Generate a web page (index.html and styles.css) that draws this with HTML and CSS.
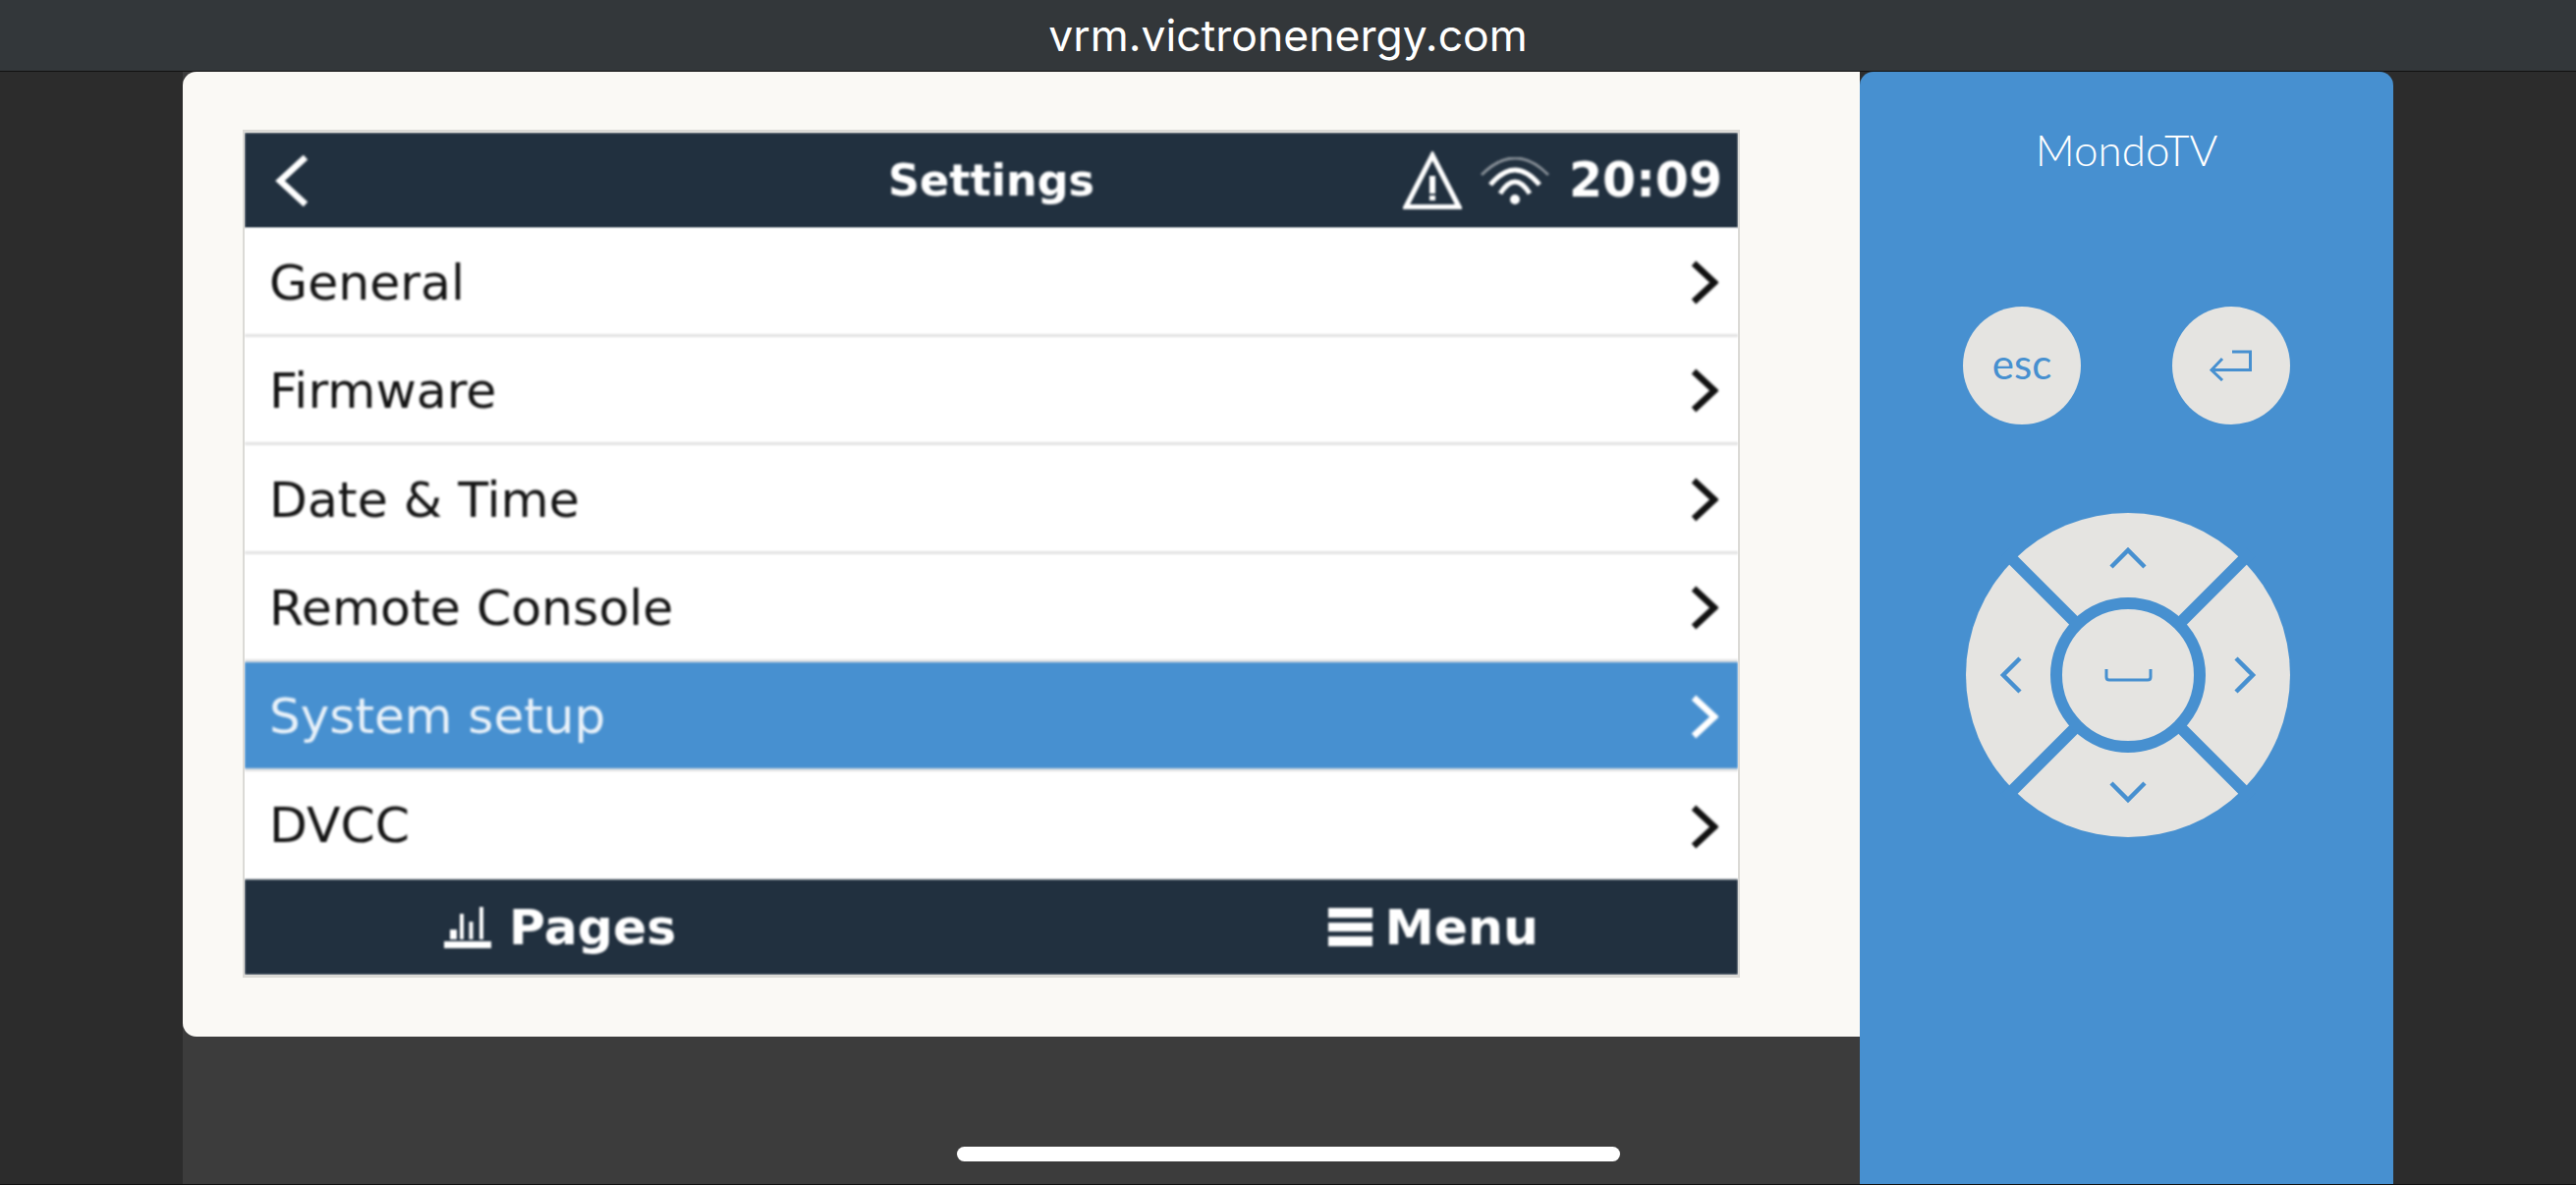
FILE: index.html
```html
<!DOCTYPE html>
<html lang="en">
<head>
    <meta charset="UTF-8">
    <meta name="viewport" content="width=device-width, initial-scale=1.0">
    <title>MondoTV - Remote Console</title>
    <link rel="stylesheet" href="styles.css">
</head>
<body>
    <header class="address-bar">vrm.victronenergy.com</header>

    <div class="stage">
        <main class="viewer">
            <div class="card">
                <div class="console">
                    <div class="console-head">
                        <svg class="back-icon" viewBox="0 0 34 52"><path d="M31 2 L5 26 L31 50" /></svg>
                        <h1 class="console-title">Settings</h1>
                        <div class="status">
                            <svg class="warn-icon" viewBox="0 0 60 59">
                                <path class="warn-outline" d="M30 4 L57 56.5 L3 56.5 Z" />
                                <rect x="27" y="25" width="6" height="18" />
                                <rect x="27" y="45" width="6" height="5" />
                            </svg>
                            <svg class="wifi-icon" viewBox="0 0 70 48">
                                <path class="wifi-far" d="M1 18 Q35 -16 69 18" />
                                <path d="M10 28 Q35 -2 60 28" />
                                <path d="M20 37 Q35 13 50 37" />
                                <circle cx="35" cy="43" r="5" />
                            </svg>
                            <span class="clock">20:09</span>
                        </div>
                    </div>

                    <ul class="menu-list">
                        <li class="menu-row"><span class="row-label">General</span><svg class="chevron" viewBox="0 0 28 45"><path d="M3 3 L24 22.5 L3 42" /></svg></li>
                        <li class="menu-row"><span class="row-label">Firmware</span><svg class="chevron" viewBox="0 0 28 45"><path d="M3 3 L24 22.5 L3 42" /></svg></li>
                        <li class="menu-row"><span class="row-label">Date &amp; Time</span><svg class="chevron" viewBox="0 0 28 45"><path d="M3 3 L24 22.5 L3 42" /></svg></li>
                        <li class="menu-row"><span class="row-label">Remote Console</span><svg class="chevron" viewBox="0 0 28 45"><path d="M3 3 L24 22.5 L3 42" /></svg></li>
                        <li class="menu-row selected"><span class="row-label">System setup</span><svg class="chevron" viewBox="0 0 28 45"><path d="M3 3 L24 22.5 L3 42" /></svg></li>
                        <li class="menu-row"><span class="row-label">DVCC</span><svg class="chevron" viewBox="0 0 28 45"><path d="M3 3 L24 22.5 L3 42" /></svg></li>
                    </ul>

                    <div class="console-foot">
                        <div class="foot-item pages">
                            <svg class="pages-icon" viewBox="0 0 48 42">
                                <rect x="0" y="35" width="48" height="7" />
                                <rect x="6" y="23" width="7" height="10" />
                                <rect x="16" y="7" width="4" height="26" />
                                <rect x="25.5" y="15" width="4" height="18" />
                                <rect x="36" y="0" width="4" height="33" />
                            </svg>
                            Pages
                        </div>
                        <div class="foot-item menu">
                            <svg class="menu-icon" viewBox="0 0 45 39">
                                <rect y="0" width="45" height="10" />
                                <rect y="15" width="45" height="9" />
                                <rect y="29" width="45" height="10" />
                            </svg>
                            Menu
                        </div>
                    </div>
                </div>
            </div>
        </main>

        <aside class="keypad">
            <div class="device-name">MondoTV</div>
            <div class="round-keys">
                <div class="round-key esc">esc</div>
                <div class="round-key">
                    <svg class="enter-icon" viewBox="0 0 44 32">
                        <path d="M23 2 H41.5 V20.5 H3" />
                        <path d="M13 9 L2 20.5 L13 31" />
                    </svg>
                </div>
            </div>
            <svg class="dpad" viewBox="0 0 330 330">
                <circle class="dpad-base" cx="165" cy="165" r="165" />
                <path class="dpad-gap" d="M40 40 L290 290 M290 40 L40 290" />
                <circle class="dpad-ok" cx="165" cy="165" r="73" />
                <path class="dpad-mark" d="M148 55 L165 38 L182 55" />
                <path class="dpad-mark" d="M148 275 L165 292 L182 275" />
                <path class="dpad-mark" d="M55 148 L38 165 L55 182" />
                <path class="dpad-mark" d="M275 148 L292 165 L275 182" />
                <path class="dpad-space" d="M143 159 V167 Q143 170 146 170 H185 Q188 170 188 167 V159" />
            </svg>
        </aside>
    </div>

    <div class="home-bar"></div>
</body>
</html>
```

FILE: styles.css
```css
html, body {
    height: 100%;
}
body {
    margin: 0;
    display: flex;
    flex-direction: column;
    height: 1206px;
    overflow: hidden;
    background-color: #2c2c2c;
    border-bottom: 1px solid #111;
    box-sizing: border-box;
    font-family: "DejaVu Sans", sans-serif;
}

.address-bar {
    flex: none;
    height: 72px;
    line-height: 72px;
    border-bottom: 1px solid #111;
    background-color: #33373a;
    color: #fff;
    text-align: center;
    font-family: Inter, sans-serif;
    font-size: 44.500px;
}

.stage {
    flex: 1;
    display: flex;
    margin-left: 186px;
    width: 2250px;
    min-height: 0;
}

/* left side, the console picture */
.viewer {
    width: 1707px;
    background-color: #3c3c3c;
}
.card {
    padding: 59px 122px 60px 61px;
    background-color: #faf9f5;
    border-radius: 14px 0 0 14px;
}
.console {
    border: solid #dbdad6;
    border-width: 3px 2px;
    background-color: #fff;
    overflow: hidden;
}
/* the console is an upscaled picture, so everything in it is a bit soft */
.console > * {
    filter: blur(0.8px);
}

.console-head {
    display: grid;
    grid-template-columns: 1fr auto 1fr;
    align-items: center;
    height: 97px;
    background-color: #21303f;
    color: #fff;
}
.back-icon {
    width: 34px;
    height: 52px;
    margin-left: 31px;
    fill: none;
    stroke: #fff;
    stroke-width: 6.500;
}
.console-title {
    margin: 0;
    font-size: 44.500px;
    font-weight: bold;
}
.status {
    display: flex;
    justify-content: flex-end;
    align-items: center;
    padding-right: 16px;
}
.warn-icon {
    width: 60px;
    height: 59px;
    margin-right: 19px;
    fill: #fff;
}
.warn-outline {
    fill: none;
    stroke: #fff;
    stroke-width: 5;
}
.wifi-icon {
    width: 70px;
    height: 48px;
    margin-right: 20px;
    fill: none;
    stroke: #fff;
    stroke-width: 5;
}
.wifi-icon circle {
    fill: #fff;
    stroke: none;
}
.wifi-far {
    stroke-width: 3;
    stroke-opacity: 0.45;
}
.clock {
    font-size: 49px;
    font-weight: bold;
}

.menu-list {
    margin: 0;
    padding: 0;
    list-style: none;
}
.menu-row {
    display: flex;
    justify-content: space-between;
    align-items: center;
    box-sizing: border-box;
    height: 110.500px;
    padding: 0 20px 0 25px;
    border-bottom: 3px solid #e2e2e2;
    background-color: #fff;
    color: #151515;
    font-size: 50.500px;
}
.row-label {
    padding-top: 3px;
}
.menu-row:last-child {
    border-bottom: none;
}
.menu-row:last-child .row-label {
    padding-top: 0;
}
.menu-row.selected {
    background-color: #4790d0;
    border-bottom-color: #e2e2e2;
    color: #e8f1f9;
    font-size: 50px;
}
.chevron {
    width: 28px;
    height: 45px;
    margin-top: 3px;
    fill: none;
    stroke: #111;
    stroke-width: 6.500;
}
.selected .chevron {
    stroke: #fff;
}

.console-foot {
    display: flex;
    justify-content: space-between;
    align-items: center;
    height: 97px;
    padding: 0 203px 0 203px;
    background-color: #21303f;
    color: #fff;
    font-size: 50.500px;
    font-weight: bold;
}
.foot-item {
    display: flex;
    align-items: center;
}
.pages {
    gap: 18px;
}
.menu {
    gap: 13px;
}
.pages-icon {
    width: 48px;
    height: 42px;
    fill: #fff;
}
.menu-icon {
    width: 45px;
    height: 39px;
    fill: #fff;
}

/* right side, the blue keypad */
.keypad {
    width: 543px;
    display: flex;
    flex-direction: column;
    align-items: center;
    background-color: #4790d0;
    border-radius: 14px 14px 0 0;
}
.device-name {
    margin-top: 54px;
    line-height: 50px;
    color: #fff;
    font-family: Lato, sans-serif;
    font-size: 44px;
    font-weight: 300;
}
.round-keys {
    display: flex;
    gap: 93px;
    margin-top: 135px;
}
.round-key {
    display: flex;
    justify-content: center;
    align-items: center;
    width: 120px;
    height: 120px;
    border-radius: 50%;
    background-color: #e5e4e1;
    color: #4790d0;
    font-family: Lato, sans-serif;
    font-size: 42px;
}
.esc {
    box-sizing: border-box;
    padding-bottom: 5px;
}
.enter-icon {
    width: 44px;
    height: 32px;
    fill: none;
    stroke: #4790d0;
    stroke-width: 3;
}
.dpad {
    width: 330px;
    height: 330px;
    margin-top: 90px;
    margin-left: 3px;
}
.dpad-base {
    fill: #e5e4e1;
}
.dpad-gap {
    fill: none;
    stroke: #4790d0;
    stroke-width: 12;
}
.dpad-ok {
    fill: #e5e4e1;
    stroke: #4790d0;
    stroke-width: 12;
}
.dpad-mark {
    fill: none;
    stroke: #4790d0;
    stroke-width: 4.500;
}
.dpad-space {
    fill: none;
    stroke: #4790d0;
    stroke-width: 3;
}

.home-bar {
    position: absolute;
    left: 974px;
    top: 1167px;
    width: 675px;
    height: 15px;
    border-radius: 8px;
    background-color: #fff;
}
```
